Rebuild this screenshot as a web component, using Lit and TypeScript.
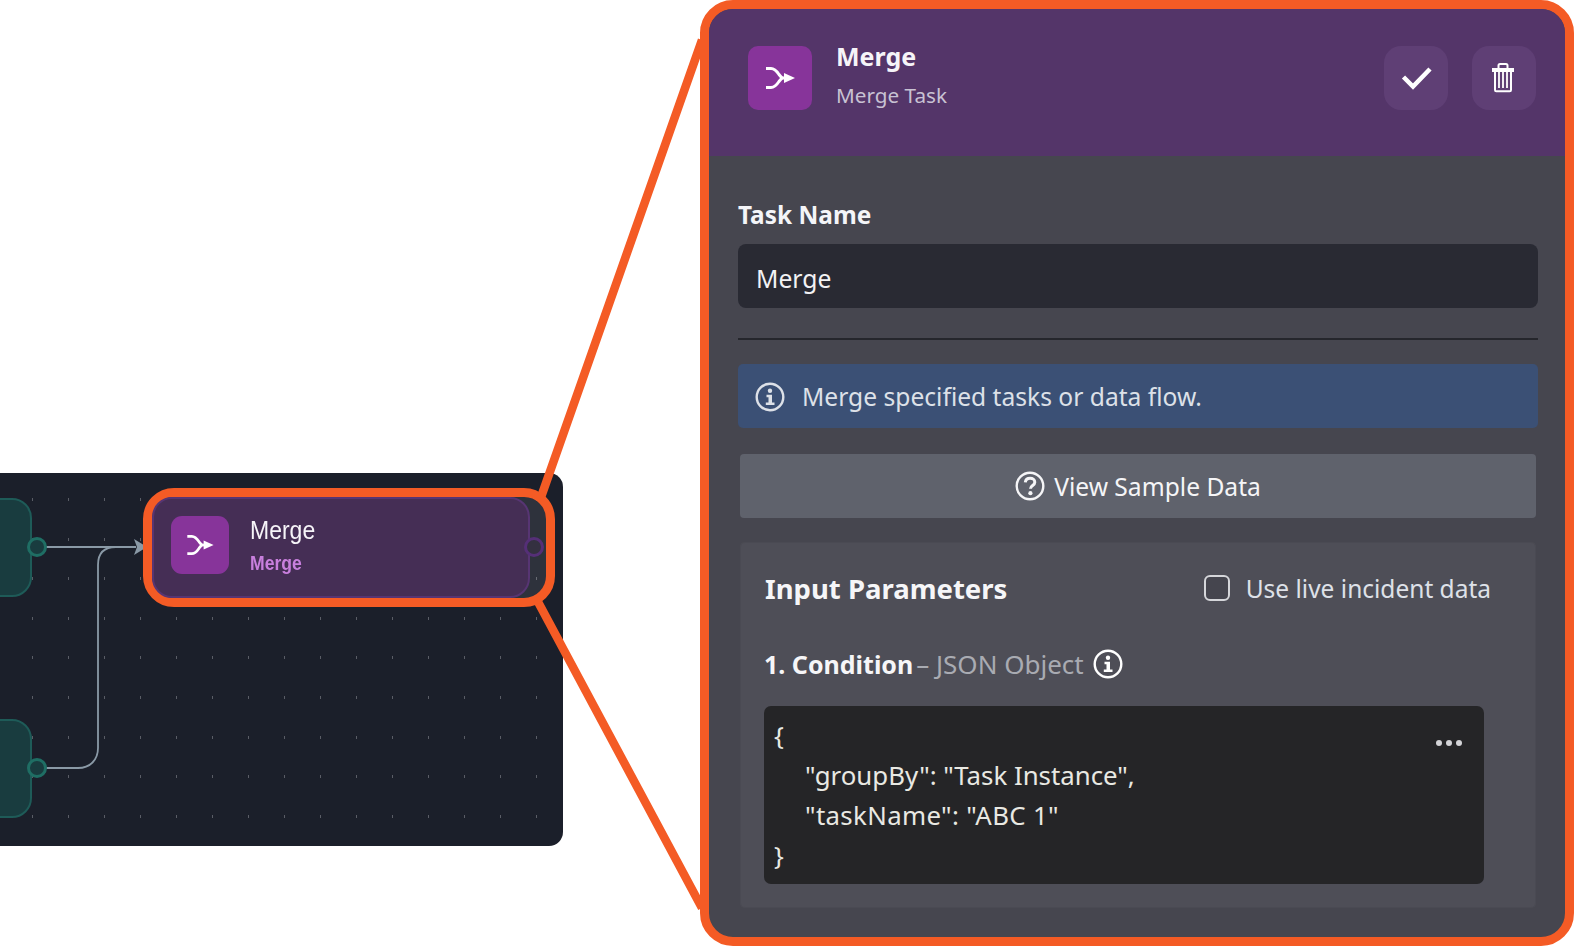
import { LitElement, html, css, svg } from "lit";
import { customElement } from "lit/decorators.js";

const mergeIcon = html`<svg class="merge" viewBox="0 0 64 64" fill="none">
  <path d="M18 22.500h5c4 0 6 3 8 6l3 3.500-3 3.500c-2 3-4 6-8 6h-5" stroke="#fff" stroke-width="3"/>
  <path d="M32 32h6" stroke="#fff" stroke-width="3"/>
  <path d="M36 27l11 5-11 5z" fill="#fff"/>
</svg>`;

const infoGlyph = svg`<circle cx="15" cy="15" r="13.300" fill="none" stroke="currentColor" stroke-width="2.400"/>
  <circle cx="15" cy="8.800" r="2.200" fill="currentColor"/>
  <path d="M11.500 12.800h5.500v7.700h2.500v2.500H10.800v-2.500h2.700V15.300h-2z" fill="currentColor"/>`;

const helpGlyph = svg`<circle cx="15" cy="15" r="13.300" fill="none" stroke="currentColor" stroke-width="2.400"/>
  <path d="M10.300 11.300c.3-2.600 2.200-4 4.800-4 2.800 0 4.700 1.600 4.700 3.900 0 3.400-4.300 3.300-4.300 6.600" fill="none" stroke="currentColor" stroke-width="3"/>
  <circle cx="15.400" cy="22.200" r="2.100" fill="currentColor"/>`;

@customElement("app-root")
export class AppRoot extends LitElement {
  static styles = css`
    :host {
      display: block;
      position: relative;
      width: 1574px;
      height: 946px;
      overflow: hidden;
      background: #fff;
      font-family: "Noto Sans", "Open Sans", sans-serif;
    }
    .page { display: flex; align-items: flex-start; height: 100%; }
    .left { width: 563px; padding-top: 473px; flex: none; margin-right: 137px; }
    .canvas {
      position: relative;
      height: 373px;
      border-radius: 0 14px 14px 0;
      background-color: #1b1f2a;
    }
    .grid {
      position: absolute; left: 32px; top: 25px; right: 24px; bottom: 28px;
      background-image: repeating-linear-gradient(90deg, #5a5d66 0 1px, transparent 1px 36px);
      -webkit-mask-image: repeating-linear-gradient(180deg, #000 0 3px, transparent 3px 39.600px);
      mask-image: repeating-linear-gradient(180deg, #000 0 3px, transparent 3px 39.600px);
    }
    .task {
      position: absolute; left: -20px; width: 52px; height: 99px; box-sizing: border-box;
      background: #193c3f; border: 2px solid #1e5b58; border-radius: 20px;
    }
    .task.a { top: 25px; }
    .task.b { top: 246px; }
    .edges { position: absolute; left: 0; top: 0; width: 160px; height: 372px; overflow: visible; }
    .ring {
      position: absolute; left: 143px; top: 15px; width: 412px; height: 119px;
      box-sizing: border-box; border: 9px solid #f45b25; border-radius: 31px;
      background: rgba(255, 255, 255, 0.085);
      z-index: 2;
      display: flex; align-items: flex-start;
    }
    .node {
      width: 378px; height: 101px; box-sizing: border-box; margin-top: 0;
      border: 2px solid #573573; border-radius: 20px; background: #452e55;
      display: flex; align-items: center; padding: 0 0 5px 17px; gap: 21px;
      font-family: "Liberation Sans", Arial, sans-serif;
    }
    .node-icon {
      width: 58px; height: 58px; border-radius: 11px; background: #87349a; flex: none;
      display: flex;
    }
    .merge { width: 100%; height: 100%; display: block; }
    .node-name { font-size: 23px; line-height: 28px; color: #f6f4f8; transform: scaleY(1.1); }
    .node-type { font-size: 17.600px; font-weight: 700; line-height: 22px; margin-top: 8px; color: #c87fdd; transform: scaleY(1.1); }
    .port {
      position: absolute; width: 20px; height: 20px; box-sizing: border-box; border-radius: 50%;
      border: 3px solid #1f6e64; background: #193c3f;
    }
    .port.out1 { left: 27px; top: 64px; }
    .port.out2 { left: 27px; top: 285px; }
    .port.purple { left: 524px; top: 64px; border-color: #552f77; background: #343040; z-index: 3; }
    .zoomlines { position: absolute; left: 0; top: 0; width: 1574px; height: 946px; pointer-events: none; z-index: 1; }

    .panel {
      position: relative; z-index: 2;
      width: 874px; height: 946px; box-sizing: border-box; flex: none;
      border: 9px solid #f45b25; border-radius: 33px; background: #46464f;
      overflow: hidden; color: #fff;
    }
    .head {
      height: 147px; box-sizing: border-box; background: #543569;
      display: flex; align-items: flex-start; padding: 37px 29px 0 39px;
    }
    .head-icon { width: 64px; height: 64px; border-radius: 10px; background: #87349a; flex: none; }
    .head-text { margin-left: 24px; flex: 1; }
    .title { font-size: 25px; font-weight: 700; line-height: 30px; margin-top: -5px; color: #f6f4f8; }
    .sub { font-size: 20.700px; line-height: 30px; margin-top: 9px; color: #c8c2d3; }
    .icon-btn {
      width: 64px; height: 64px; border-radius: 17px; background: #5f3f75; flex: none; margin-left: 24px;
    }
    .icon-btn svg { display: block; width: 64px; height: 64px; }
    .body { padding: 44px 27px 0 29px; }
    .label { font-size: 24.400px; font-weight: 700; line-height: 30px; color: #f4f5f8; }
    .input {
      height: 64px; margin-top: 14px; box-sizing: border-box; border-radius: 8px; background: #292a33;
      padding: 5px 0 0 18px; display: flex; align-items: center; font-size: 24.700px; color: #f2f2f4;
    }
    .sep { height: 2px; background: #25262c; margin-top: 30px; }
    .info {
      height: 64px; margin-top: 24px; box-sizing: border-box; border-radius: 5px; background: #3b5075;
      display: flex; align-items: center; padding-left: 17px; gap: 17px; font-size: 24.600px; color: #dde1e8;
    }
    .info .glyph { margin-top: 2px; }
    .glyph { width: 30px; height: 30px; flex: none; display: block; }
    .view {
      height: 64px; margin: 26px 2px 0; box-sizing: border-box; border-radius: 4px; background: #5f626c;
      display: flex; align-items: center; justify-content: center; gap: 9px; font-size: 24.600px; color: #f5f5f7;
    }
    .card {
      margin: 24px 2px 0; height: 366px; box-sizing: border-box; border-radius: 5px; background: #4e4e57;
      padding: 28px 0 0 24px; box-shadow: inset 0 0 0 1px #4a4a53;
    }
    .card-head { display: flex; align-items: center; height: 36px; padding: 0 45px 0 1px; }
    .card-title { flex: 1; font-size: 27.500px; font-weight: 700; color: #f6f6f8; }
    .check {
      width: 26px; height: 26px; box-sizing: border-box; border: 2px solid #d5d6da; border-radius: 6px;
      background: #45454e; margin-right: 16px;
    }
    .check-label { font-size: 24.500px; color: #dee1e8; }
    .param { display: flex; align-items: center; height: 30px; margin-top: 43px; font-size: 25px; }
    .param b { font-weight: 700; color: #f6f6f8; }
    .param span { margin-left: 3px; font-size: 26px; color: #a9abb2; }
    .param .glyph { margin-left: 9px; color: #fff; }
    .editor {
      position: relative; width: 720px; height: 178px; margin-top: 27px; box-sizing: border-box;
      border-radius: 7px; background: #252527; padding: 9px 0 0 10px;
      font-size: 25.800px; line-height: 40px; color: #e9e9e3;
    }
    .indent { padding-left: 31px; }
    .wide { letter-spacing: 0.35px; }
    .more { position: absolute; right: 22px; top: 34px; display: flex; gap: 4px; }
    .more i { width: 6px; height: 6px; border-radius: 50%; background: #d4d4d7; display: block; }
  `;

  render() {
    return html`
      <div class="page">
        <div class="left">
          <div class="canvas">
            <div class="grid"></div>
            <div class="task a"></div>
            <div class="task b"></div>
            <svg class="edges" viewBox="0 0 160 372" fill="none">
              <path d="M46 74H136" stroke="#8a99a6" stroke-width="1.800"/>
              <path d="M46 295H78c12 0 20-8 20-20V92c0-12 6-18 18-18h20" stroke="#8a99a6" stroke-width="1.800"/>
              <path d="M134 66l13 8-13 8 3-8z" fill="#8a99a6"/>
            </svg>
            <div class="port out1"></div>
            <div class="port out2"></div>
            <div class="ring">
              <div class="node">
                <div class="node-icon">${mergeIcon}</div>
                <div>
                  <div class="node-name">Merge</div>
                  <div class="node-type">Merge</div>
                </div>
              </div>
            </div>
            <div class="port purple"></div>
          </div>
        </div>
        <div class="panel">
          <div class="head">
            <div class="head-icon">${mergeIcon}</div>
            <div class="head-text">
              <div class="title">Merge</div>
              <div class="sub">Merge Task</div>
            </div>
            <div class="icon-btn">
              <svg viewBox="0 0 64 64" fill="none"><path d="M19.500 31l9.500 9.500L46 23" stroke="#fff" stroke-width="4.500"/></svg>
            </div>
            <div class="icon-btn">
              <svg viewBox="0 0 64 64" fill="none">
                <path d="M20 24h22" stroke="#fff" stroke-width="4"/>
                <path d="M26.500 22v-2.500c0-1 .5-1.500 1.500-1.500h6c1 0 1.500.5 1.500 1.500V22" stroke="#fff" stroke-width="2"/>
                <path d="M23 26v18c0 .800.500 1.300 1.300 1.300h13.400c.800 0 1.300-.500 1.300-1.300V26" stroke="#fff" stroke-width="2"/>
                <path d="M27 26v16M31 26v16M35 26v16" stroke="#fff" stroke-width="1.800"/>
              </svg>
            </div>
          </div>
          <div class="body">
            <div class="label">Task Name</div>
            <div class="input">Merge</div>
            <div class="sep"></div>
            <div class="info"><svg class="glyph" viewBox="0 0 30 30">${infoGlyph}</svg>Merge specified tasks or data flow.</div>
            <div class="view"><svg class="glyph" viewBox="0 0 30 30">${helpGlyph}</svg>View Sample Data</div>
            <div class="card">
              <div class="card-head">
                <div class="card-title">Input Parameters</div>
                <div class="check"></div>
                <div class="check-label">Use live incident data</div>
              </div>
              <div class="param"><b>1. Condition</b><span>– JSON Object</span><svg class="glyph" viewBox="0 0 30 30">${infoGlyph}</svg></div>
              <div class="editor">
                <div>{</div>
                <div class="indent">"groupBy": "Task Instance",</div>
                <div class="indent wide">"taskName": "ABC 1"</div>
                <div>}</div>
                <div class="more"><i></i><i></i><i></i></div>
              </div>
            </div>
          </div>
        </div>
      </div>
      <svg class="zoomlines" viewBox="0 0 1574 946" fill="none">
        <path d="M540 500L702 40M537 600L702 908" stroke="#f45b25" stroke-width="8.500"/>
      </svg>
    `;
  }
}
